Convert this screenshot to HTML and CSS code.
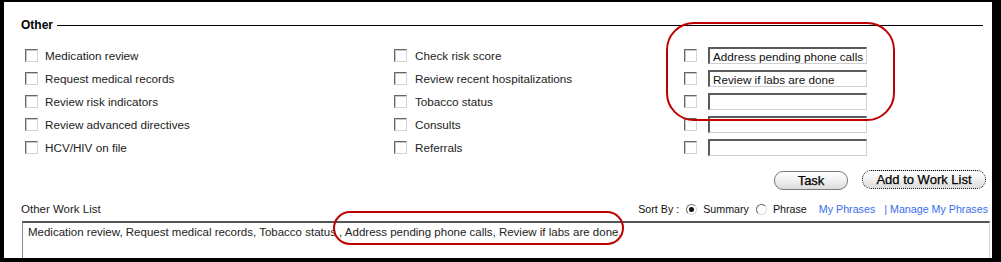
FILE: index.html
```html
<!DOCTYPE html>
<html>
<head>
<meta charset="utf-8">
<link rel="stylesheet" href="styles.css">
</head>
<body>
<div class="panel">
  <div class="legend"><span class="legend-title">Other</span><span class="legend-line"></span></div>

  <div class="options">
    <div class="opt c1"><span class="cb"></span><span class="lbl">Medication review</span></div>
    <div class="opt c2"><span class="cb"></span><span class="lbl">Check risk score</span></div>
    <div class="opt c3"><span class="cb"></span><input class="txt" type="text" value="Address pending phone calls"></div>

    <div class="opt c1"><span class="cb"></span><span class="lbl">Request medical records</span></div>
    <div class="opt c2"><span class="cb"></span><span class="lbl">Review recent hospitalizations</span></div>
    <div class="opt c3"><span class="cb"></span><input class="txt" type="text" value="Review if labs are done"></div>

    <div class="opt c1"><span class="cb"></span><span class="lbl">Review risk indicators</span></div>
    <div class="opt c2"><span class="cb"></span><span class="lbl">Tobacco status</span></div>
    <div class="opt c3"><span class="cb"></span><input class="txt" type="text" value=""></div>

    <div class="opt c1"><span class="cb"></span><span class="lbl">Review advanced directives</span></div>
    <div class="opt c2"><span class="cb"></span><span class="lbl">Consults</span></div>
    <div class="opt c3"><span class="cb"></span><input class="txt" type="text" value=""></div>

    <div class="opt c1"><span class="cb"></span><span class="lbl">HCV/HIV on file</span></div>
    <div class="opt c2"><span class="cb"></span><span class="lbl">Referrals</span></div>
    <div class="opt c3"><span class="cb"></span><input class="txt" type="text" value=""></div>
  </div>

  <div class="buttons">
    <button class="btn btn-task">Task</button>
    <button class="btn btn-add">Add to Work List</button>
  </div>

  <div class="list-head">
    <span class="list-title">Other Work List</span>
    <div class="sort">
      <span class="sort-lbl">Sort By :</span>
      <span class="radio checked"></span><span class="rlbl">Summary</span>
      <span class="radio"></span><span class="rlbl">Phrase</span>
      <a class="link link-my">My Phrases</a>
      <a class="link">| Manage My Phrases</a>
    </div>
  </div>

  <div class="worklist">Medication review, Request medical records, Tobacco status , Address pending phone calls, Review if labs are done.</div>

  <div class="mark mark-top"></div>
  <div class="mark mark-bottom"></div>
</div>
</body>
</html>
```

FILE: styles.css
```css
html, body {
  margin: 0;
  padding: 0;
  background: #000;
  width: 1001px;
  height: 262px;
  overflow: hidden;
}

body {
  font-family: "Liberation Sans", Arial, sans-serif;
  font-size: 11.7px;
  color: #222;
}

.panel {
  position: relative;
  background: #fff;
  margin: 2px 9px 0 4px;
  height: 256px;
  overflow: hidden;
}

.legend {
  display: flex;
  align-items: center;
  height: 16px;
  padding: 15px 9px 0 17px;
}

.legend-title {
  font-weight: bold;
  font-size: 12px;
  color: #000;
  line-height: 16px;
}

.legend-line {
  flex: 1;
  height: 0;
  border-top: 1px solid #000;
  margin-left: 4px;
}

.options {
  display: grid;
  grid-template-columns: 369px 290px 300px;
  grid-auto-rows: 23px;
  padding-left: 21px;
  margin-top: 11px;
}

.opt {
  display: flex;
  align-items: center;
}

.cb {
  box-sizing: border-box;
  width: 13px;
  height: 13px;
  flex: none;
  border: 1px solid;
  border-color: #666 #d4d4d4 #d4d4d4 #666;
  background: #fff;
  box-shadow: inset 1px 1px 0 #c8c8c8;
}

.c1 .lbl { margin-left: 7px; }
.c2 .lbl { margin-left: 8px; }

.lbl {
  white-space: nowrap;
  color: #222;
}

.txt {
  box-sizing: border-box;
  width: 159px;
  height: 17px;
  margin: 0 0 0 11px;
  padding: 0 0 0 3px;
  border-style: solid;
  border-width: 2px 1px 1px 2px;
  border-color: #5a5a5a #d0d0d0 #d0d0d0 #5a5a5a;
  font-family: "Liberation Sans", Arial, sans-serif;
  font-size: 11.7px;
  color: #111;
  background: #fff;
  outline: none;
}

.buttons {
  display: flex;
  justify-content: flex-end;
  gap: 14px;
  padding-right: 6px;
  margin-top: 11px;
}

.btn {
  box-sizing: border-box;
  height: 19px;
  padding: 0;
  border-radius: 9px;
  font-family: "Liberation Sans", Arial, sans-serif;
  font-size: 13px;
  color: #000;
  line-height: 16px;
  background: linear-gradient(#ffffff, #f2f2f2 45%, #dcdcdc);
  -webkit-text-stroke: 0.25px #000;
}

.btn-task {
  width: 74px;
  border: 1px solid #7a7a7a;
  margin-top: 1px;
}

.btn-add {
  width: 124px;
  border: 1px dotted #000;
}

.list-head {
  display: flex;
  justify-content: space-between;
  align-items: center;
  height: 16px;
  margin-top: 11px;
  padding: 0 4px 0 17px;
}

.list-title {
  font-size: 11.5px;
  color: #222;
}

.sort {
  display: flex;
  align-items: center;
  white-space: nowrap;
  font-size: 10.7px;
  color: #111;
}

.sort-lbl {
  margin-right: 7px;
}

.radio {
  box-sizing: border-box;
  position: relative;
  width: 11px;
  height: 11px;
  border-radius: 50%;
  border: 1px solid;
  border-color: #6a6a6a #d8d8d8 #d8d8d8 #6a6a6a;
  background: #fff;
  margin-right: 6px;
}

.radio.checked::after {
  content: "";
  position: absolute;
  left: 2px;
  top: 2px;
  width: 5px;
  height: 5px;
  border-radius: 50%;
  background: #111;
}

.rlbl {
  margin-right: 7px;
}

.link {
  color: #3a6cf0;
  text-decoration: none;
}

.link-my {
  margin-left: 5px;
  margin-right: 9px;
}

.worklist {
  box-sizing: border-box;
  margin: 4px 2px 0 18px;
  height: 60px;
  padding: 3px 5px;
  border-style: solid;
  border-width: 2px 1px 0 1px;
  border-color: #555 #d0d0d0 #d0d0d0 #888;
  font-size: 11.5px;
  color: #222;
  white-space: nowrap;
}

.mark {
  position: absolute;
  box-sizing: border-box;
  border: 2px solid #c00000;
}

.mark-top {
  left: 662px;
  top: 20px;
  width: 229px;
  height: 99px;
  border-radius: 28px;
}

.mark-bottom {
  left: 329px;
  top: 209px;
  width: 291px;
  height: 34px;
  border-radius: 17px;
}
```
